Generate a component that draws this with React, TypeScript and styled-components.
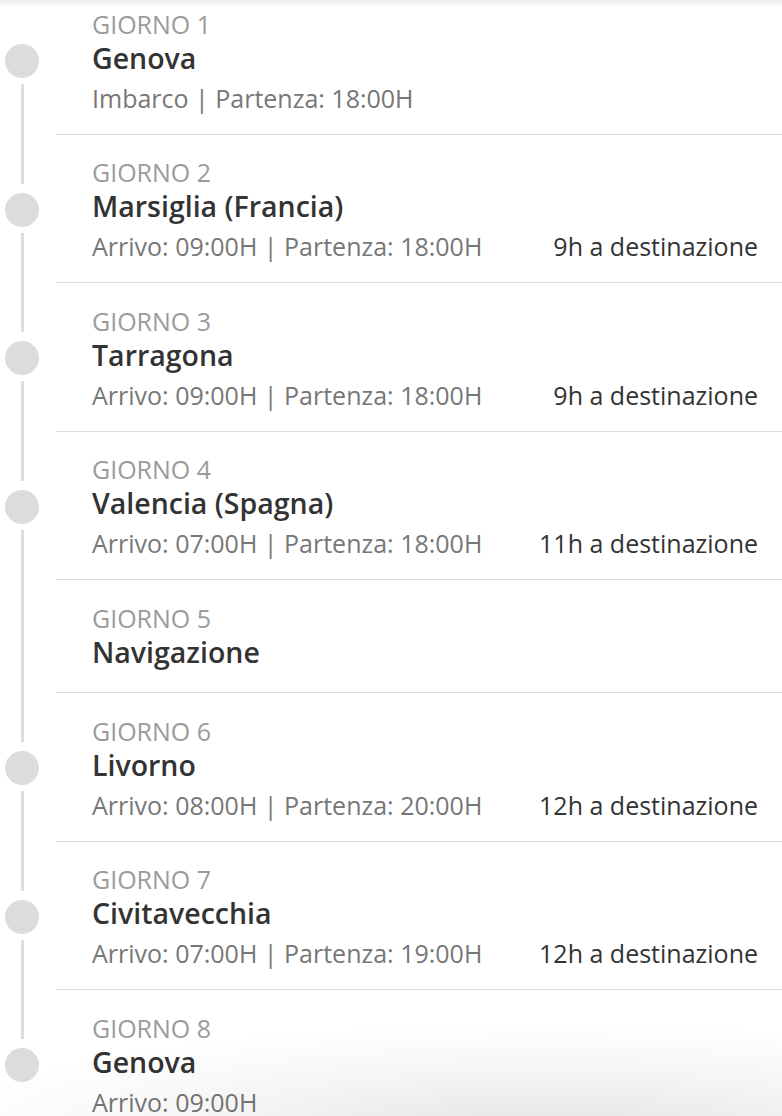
import styled, { createGlobalStyle } from 'styled-components';

const GlobalStyle = createGlobalStyle`
  html, body {
    margin: 0;
    padding: 0;
    background: #fff;
    overflow: hidden;
  }
  body {
    font-family: "Open Sans", "Noto Sans", "Liberation Sans", sans-serif;
    -webkit-font-smoothing: antialiased;
  }
`;

const Page = styled.main`
  width: 782px;
  height: 1116px;
  overflow: hidden;
`;

const List = styled.ol`
  list-style: none;
  margin: -14px 0 0;
  padding: 0;
`;

const Row = styled.li`
  display: grid;
  grid-template-columns: 44px 1fr;
  column-gap: 12px;
`;

const Rail = styled.div`
  display: flex;
  flex-direction: column;
  align-items: center;
`;

const Segment = styled.span<{ $hidden?: boolean; $grow?: boolean }>`
  display: block;
  width: 3px;
  margin-left: 1px;
  background: #dddddd;
  height: ${(p) => (p.$grow ? 'auto' : '49px')};
  flex: ${(p) => (p.$grow ? '1 1 auto' : 'none')};
  visibility: ${(p) => (p.$hidden ? 'hidden' : 'visible')};
`;

const Dot = styled.span`
  display: block;
  width: 34px;
  height: 34px;
  border-radius: 50%;
  background: #dcdcdc;
  margin: 9px 0 6px;
  flex: none;
`;

const Body = styled.div<{ $short?: boolean }>`
  border-bottom: 1px solid #dedede;
  padding: 20.5px 24px ${(p) => (p.$short ? '22.5px' : '19px')} 36px;
`;

const Day = styled.div`
  font-size: 25px;
  line-height: 34px;
  font-weight: 400;
  color: #9b9b9b;
  text-transform: uppercase;
`;

const Place = styled.h3`
  margin: 0;
  font-size: 28.5px;
  line-height: 35px;
  font-weight: 600;
  color: #333333;
`;

const Info = styled.div`
  display: flex;
  justify-content: space-between;
  align-items: baseline;
  margin-top: 5px;
  font-size: 25px;
  line-height: 34px;
`;

const Times = styled.span`
  color: #777777;
`;

const Stay = styled.span`
  color: #333333;
`;

const TopShade = styled.div`
  position: fixed;
  top: 0;
  left: 0;
  right: 0;
  height: 7px;
  background: linear-gradient(to bottom, rgba(0, 0, 0, 0.07), rgba(0, 0, 0, 0));
  pointer-events: none;
`;

const BottomShade = styled.div`
  position: fixed;
  left: 0;
  right: 0;
  bottom: 0;
  height: 110px;
  background: radial-gradient(
    ellipse 80% 100% at 70% 115%,
    rgba(0, 0, 0, 0.11) 0%,
    rgba(0, 0, 0, 0.04) 55%,
    rgba(0, 0, 0, 0) 100%
  );
  pointer-events: none;
`;

type Stop = {
  day: number;
  place: string;
  times?: string;
  stay?: string;
};

const stops: Stop[] = [
  { day: 1, place: 'Genova', times: 'Imbarco | Partenza: 18:00H' },
  { day: 2, place: 'Marsiglia (Francia)', times: 'Arrivo: 09:00H | Partenza: 18:00H', stay: '9h a destinazione' },
  { day: 3, place: 'Tarragona', times: 'Arrivo: 09:00H | Partenza: 18:00H', stay: '9h a destinazione' },
  { day: 4, place: 'Valencia (Spagna)', times: 'Arrivo: 07:00H | Partenza: 18:00H', stay: '11h a destinazione' },
  { day: 5, place: 'Navigazione' },
  { day: 6, place: 'Livorno', times: 'Arrivo: 08:00H | Partenza: 20:00H', stay: '12h a destinazione' },
  { day: 7, place: 'Civitavecchia', times: 'Arrivo: 07:00H | Partenza: 19:00H', stay: '12h a destinazione' },
  { day: 8, place: 'Genova', times: 'Arrivo: 09:00H' },
];

export default function App() {
  return (
    <Page>
      <GlobalStyle />
      <List>
        {stops.map((stop, i) => {
          const atSea = !stop.times;
          return (
            <Row key={stop.day}>
              <Rail>
                {atSea ? (
                  <Segment $grow />
                ) : (
                  <>
                    <Segment $hidden={i === 0} />
                    <Dot />
                    <Segment $grow $hidden={i === stops.length - 1} />
                  </>
                )}
              </Rail>
              <Body $short={atSea}>
                <Day>Giorno {stop.day}</Day>
                <Place>{stop.place}</Place>
                {stop.times && (
                  <Info>
                    <Times>{stop.times}</Times>
                    {stop.stay && <Stay>{stop.stay}</Stay>}
                  </Info>
                )}
              </Body>
            </Row>
          );
        })}
      </List>
      <TopShade />
      <BottomShade />
    </Page>
  );
}
